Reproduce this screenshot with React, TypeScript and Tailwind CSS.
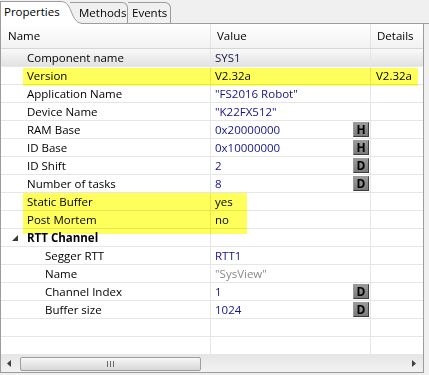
import React from "react";

type Row = {
  name: string;
  value?: string;
  details?: string;
  level?: 1 | 2;
  tone?: "navy" | "black" | "gray" | "dark";
  btn?: "H" | "D";
  group?: boolean;
  selected?: boolean;
};

const rows: Row[] = [
  { name: "Component name", value: "SYS1", tone: "dark", selected: true },
  { name: "Version", value: "V2.32a", details: "V2.32a", tone: "black" },
  { name: "Application Name", value: '"FS2016 Robot"' },
  { name: "Device Name", value: '"K22FX512"' },
  { name: "RAM Base", value: "0x20000000", btn: "H" },
  { name: "ID Base", value: "0x10000000", btn: "H" },
  { name: "ID Shift", value: "2", btn: "D" },
  { name: "Number of tasks", value: "8", btn: "D" },
  { name: "Static Buffer", value: "yes", tone: "black" },
  { name: "Post Mortem", value: "no", tone: "black" },
  { name: "RTT Channel", group: true },
  { name: "Segger RTT", value: "RTT1", level: 2 },
  { name: "Name", value: '"SysView"', level: 2, tone: "gray" },
  { name: "Channel Index", value: "1", level: 2, btn: "D" },
  { name: "Buffer size", value: "1024", level: 2, btn: "D" },
  { name: "" },
  { name: "" },
];

const toneClass = {
  navy: "text-[#14148c]",
  black: "text-black",
  gray: "text-[#8a8a8a]",
  dark: "text-[#16164a]",
};

function SmallButton({ label }: { label: string }) {
  return (
    <div className="mr-[1px] flex h-[15px] w-[16px] items-center justify-center border border-[#3c3c3c] border-l-[#9a9a9a] border-t-[#9a9a9a] bg-gradient-to-b from-[#9a9a9a] to-[#7c7c7c] text-[12px] leading-none font-bold text-black">
      {label}
    </div>
  );
}

function PropRow({ row }: { row: Row }) {
  const tone = toneClass[row.tone ?? "navy"];
  return (
    <div
      className={`flex h-[18px] border-b border-[#e6e6e6] leading-[17px] ${
        row.selected ? "rounded-[2px] bg-gradient-to-b from-[#f9f9f9] to-[#e2e2e2]" : ""
      }`}
    >
      <div className="flex w-[210px] items-center border-r border-[#e6e6e6]">
        {row.group ? (
          <>
            <svg width="6" height="6" className="ml-[11px] mr-[9px]">
              <polygon points="6,0 6,6 0,6" fill="#3a3a3a" />
            </svg>
            <span className="font-bold text-black">{row.name}</span>
          </>
        ) : (
          <span className={`text-black ${row.level === 2 ? "pl-[44px]" : "pl-[26px]"}`}>{row.name}</span>
        )}
      </div>
      <div className="flex w-[160px] items-center justify-between border-r border-[#e6e6e6] pl-[4px]">
        <span className={tone}>{row.value}</span>
        {row.btn && <SmallButton label={row.btn} />}
      </div>
      <div className="flex-1 pl-[5px] text-black">{row.details}</div>
    </div>
  );
}

export default function App() {
  return (
    <div
      className="relative h-[375px] w-[429px] overflow-hidden bg-[#f0f0f0] text-[11.5px] text-black"
      style={{ fontFamily: '"Open Sans", "Noto Sans", sans-serif' }}
    >
      {/* tab strip */}
      <div className="flex h-[24px] items-end">
        <div className="relative z-10 h-[23px] w-[60px] whitespace-nowrap border-l border-t border-[#9c9c9c] bg-white pl-[3px] leading-[20px]">
          Properties
        </div>
        <svg width="23" height="23" className="relative z-10 -mr-[13px]">
          <path d="M0,0.5 C6,0.5 8,3 11,10 C14,18 17,22.5 23,22.5 L23,23 L0,23 Z" fill="#ffffff" />
          <path d="M0,0.5 C6,0.5 8,3 11,10 C14,18 17,22.5 23,22.5" fill="none" stroke="#9c9c9c" />
        </svg>
        <div className="h-[22px] w-[58px] whitespace-nowrap rounded-tr-[6px] border-r border-t border-b border-[#9c9c9c] bg-[#f0f0f0] pl-[9px] leading-[20px]">
          Methods
        </div>
        <div className="h-[22px] w-[43px] whitespace-nowrap rounded-tr-[6px] border-r border-t border-b border-[#9c9c9c] bg-[#f0f0f0] pl-[4px] leading-[20px]">
          Events
        </div>
        <div className="h-px flex-1 bg-[#9c9c9c]" />
      </div>

      {/* property grid */}
      <div className="flex w-[424px] flex-col border-x border-b border-[#9c9c9c] bg-white">
        <div className="flex h-[25px] border-b border-[#d6d6d6] bg-gradient-to-b from-white to-[#f2f2f2] leading-[24px]">
          <div className="w-[210px] border-r border-[#e4e4e4] pl-[7px]">Name</div>
          <div className="w-[160px] border-r border-[#e4e4e4] pl-[6px]">Value</div>
          <div className="flex-1 pl-[6px]">Details</div>
        </div>
        {rows.map((row, i) => (
          <PropRow key={i} row={row} />
        ))}
        {/* horizontal scrollbar */}
        <div className="flex h-[17px] items-center bg-gradient-to-b from-[#e6e6e6] to-[#f2f2f2]">
          <svg width="4" height="7" className="ml-[6px]">
            <polygon points="4,0 4,7 0,3.5" fill="#404040" />
          </svg>
          <div className="ml-[9px] flex h-[14px] w-[181px] items-center justify-center rounded-[2px] border border-[#9e9e9e] bg-gradient-to-b from-[#f7f7f7] to-[#d8d8d8]">
            <div className="flex gap-[2px]">
              <div className="h-[6px] w-px bg-[#6a6a6a]" />
              <div className="h-[6px] w-px bg-[#6a6a6a]" />
              <div className="h-[6px] w-px bg-[#6a6a6a]" />
            </div>
          </div>
          <div className="flex-1" />
          <svg width="4" height="7" className="mr-[7px]">
            <polygon points="0,0 0,7 4,3.5" fill="#404040" />
          </svg>
        </div>
      </div>

      {/* highlighter annotations */}
      <div className="pointer-events-none absolute left-[23px] top-[68px] h-[18px] w-[395px] bg-[#ffff5c] mix-blend-multiply" />
      <div className="pointer-events-none absolute left-[23px] top-[193px] h-[41px] w-[224px] bg-[#ffff5c] mix-blend-multiply" />
    </div>
  );
}
